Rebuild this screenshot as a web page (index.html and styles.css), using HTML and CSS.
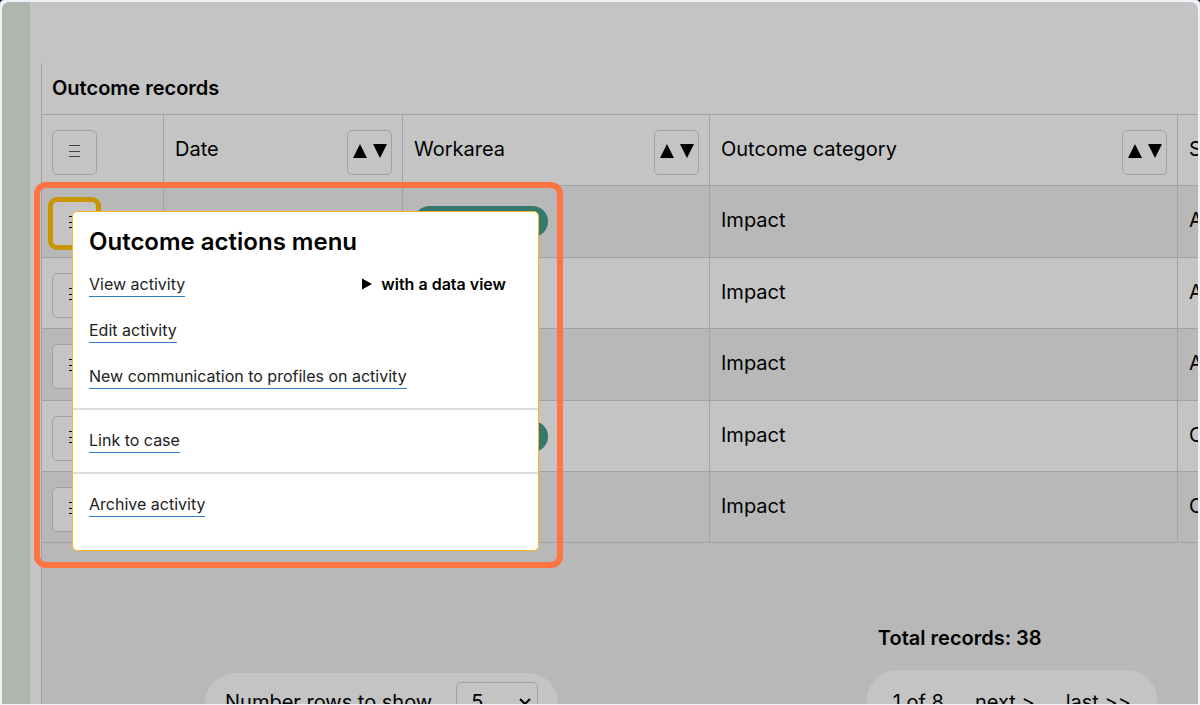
FILE: index.html
```html
<!DOCTYPE html>
<html lang="en">
<head>
<meta charset="utf-8">
<title>Outcome records</title>
<link rel="stylesheet" href="styles.css">
</head>
<body>
<svg class="defs" aria-hidden="true">
  <symbol id="menu" viewBox="0 0 12 14"><path d="M0 1.5h11M0 7.5h11M0 12.5h11" stroke="currentColor" stroke-width="1.2" fill="none"/></symbol>
  <symbol id="sort" viewBox="0 0 34 14"><path d="M0 14 7 0l7 14zM20 0h14l-7 14z" fill="currentColor"/></symbol>
</svg>
<div class="frame">
  <aside class="rail"></aside>
  <main class="content">
    <section class="records">
      <h2 class="records-title">Outcome records</h2>
      <table class="grid">
        <colgroup><col class="c-act"><col class="c-date"><col class="c-area"><col class="c-cat"><col></colgroup>
        <thead>
          <tr>
            <th><button class="square muted" aria-label="Table menu"><svg class="i-menu"><use href="#menu"/></svg></button></th>
            <th><div class="head"><span class="label">Date</span><button class="square" aria-label="Sort by date"><svg class="i-sort"><use href="#sort"/></svg></button></div></th>
            <th><div class="head"><span class="label">Workarea</span><button class="square" aria-label="Sort by workarea"><svg class="i-sort"><use href="#sort"/></svg></button></div></th>
            <th><div class="head"><span class="label">Outcome category</span><button class="square" aria-label="Sort by outcome category"><svg class="i-sort"><use href="#sort"/></svg></button></div></th>
            <th><span class="label">S</span></th>
          </tr>
        </thead>
        <tbody>
          <tr><td><button class="square active" aria-label="Row menu"><svg class="i-menu"><use href="#menu"/></svg></button></td><td></td><td><span class="tag"></span></td><td><span class="label">Impact</span></td><td><span class="label">A</span></td></tr>
          <tr><td><button class="square" aria-label="Row menu"><svg class="i-menu"><use href="#menu"/></svg></button></td><td></td><td></td><td><span class="label">Impact</span></td><td><span class="label">A</span></td></tr>
          <tr><td><button class="square" aria-label="Row menu"><svg class="i-menu"><use href="#menu"/></svg></button></td><td></td><td></td><td><span class="label">Impact</span></td><td><span class="label">A</span></td></tr>
          <tr><td><button class="square" aria-label="Row menu"><svg class="i-menu"><use href="#menu"/></svg></button></td><td></td><td><span class="tag"></span></td><td><span class="label">Impact</span></td><td><span class="label">C</span></td></tr>
          <tr><td><button class="square" aria-label="Row menu"><svg class="i-menu"><use href="#menu"/></svg></button></td><td></td><td></td><td><span class="label">Impact</span></td><td><span class="label">C</span></td></tr>
        </tbody>
      </table>
      <footer class="foot">
        <div class="pill rows">
          <label for="rows">Number rows to show</label>
          <select id="rows" class="select"><option>5</option><option>10</option></select>
        </div>
        <div class="paging">
          <p class="total">Total records: 38</p>
          <nav class="pill pager"><span>1 of 8</span><a href="#next">next &gt;</a><a href="#last">last &gt;&gt;</a></nav>
        </div>
      </footer>
    </section>
  </main>
  <div class="highlight">
    <div class="menu" role="dialog" aria-labelledby="menu-title">
      <h3 class="menu-title" id="menu-title">Outcome actions menu</h3>
      <div class="group">
        <div class="item"><a class="link" href="#view">View activity</a>
          <button class="disclose"><svg class="i-tri" viewBox="0 0 10 12"><path d="M0 0.5 10 6 0 11.5z"/></svg>with a data view</button></div>
        <div class="item"><a class="link" href="#edit">Edit activity</a></div>
        <div class="item"><a class="link" href="#communication">New communication to profiles on activity</a></div>
      </div>
      <div class="group"><div class="item"><a class="link" href="#case">Link to case</a></div></div>
      <div class="group"><div class="item"><a class="link" href="#archive">Archive activity</a></div></div>
    </div>
  </div>
</div>
</body>
</html>
```

FILE: styles.css
```css
* { box-sizing: border-box; }
html { background: #000; }
body {
  margin: 0;
  height: 100vh;
  padding: 2px 2px 1px;
  overflow: hidden;
  background: #f1f0f8;
  border-radius: 4px 4px 0 0;
  font-family: Inter, "Liberation Sans", sans-serif;
  font-size: 20px;
  line-height: 24px;
  color: #000;
}
.defs { position: absolute; width: 0; height: 0; }
.frame {
  position: relative;
  display: flex;
  height: 100%;
  overflow: hidden;
  border-radius: 8px 8px 0 0;
  background: #c4c4c4;
}
.rail { flex: none; width: 28px; background: #aeb6ad; }
.content { flex: 1; min-width: 0; display: flex; flex-direction: column; padding: 61px 0 0 11px; }
.records { flex: 1; display: flex; flex-direction: column; border-left: 1px solid #a2a2a2; }
.records-title { margin: 0; padding: 13px 10px 14px; font-size: 20px; line-height: 24px; font-weight: 600; }

.grid { width: 100%; table-layout: fixed; border-collapse: separate; border-spacing: 0; }
.c-act { width: 122px; }
.c-date { width: 239px; }
.c-area { width: 307px; }
.c-cat { width: 468px; }
.grid th, .grid td {
  height: 71px;
  padding: 0 10px 0 11px;
  border-top: 1px solid #a2a2a2;
  border-right: 1px solid #a2a2a2;
  text-align: left;
  vertical-align: top;
  font-weight: 400;
  white-space: nowrap;
}
.grid th:first-child, .grid td:first-child { padding-left: 10px; }
.grid th:last-child, .grid td:last-child { border-right: 0; }
.grid tbody tr:nth-child(odd) { height: 72px; background: #b8b8b8; }
.grid tbody tr:last-child td { border-bottom: 1px solid #a2a2a2; }
.label { display: block; padding-top: 22px; }
.head { display: flex; justify-content: space-between; }
.square {
  display: flex;
  align-items: center;
  justify-content: center;
  width: 45px;
  height: 45px;
  margin-top: 15px;
  padding: 0 0 3px;
  border: 1px solid #a2a2a2;
  border-radius: 5px;
  background: #c4c4c4;
  color: #000;
}
.muted { color: #444; }
.active { border-color: #c89500; box-shadow: 0 0 0 4px #c89500; }
.i-menu { width: 12px; height: 14px; }
.i-sort { width: 34px; height: 14px; }
.tag { display: block; width: 134px; height: 31px; margin-top: 20px; border-radius: 16px; background: #35786e; }

.foot { flex: 1; display: flex; align-items: flex-start; justify-content: space-between; background: #b8b8b8; padding: 83px 41px 0 163px; }
.pill { display: flex; background: #c4c4c4; border-radius: 30px; white-space: nowrap; }
.rows { align-items: center; gap: 24px; margin-top: 47px; padding: 9px 20px 11px; }
.select {
  appearance: none;
  width: 82px;
  height: 40px;
  padding: 0 14px;
  border: 1px solid #a2a2a2;
  border-radius: 5px;
  background: #c4c4c4 url("data:image/svg+xml,%3Csvg xmlns='http://www.w3.org/2000/svg' width='12' height='8'%3E%3Cpath d='M1 1l5 5 5-5' fill='none' stroke='black' stroke-width='2'/%3E%3C/svg%3E") no-repeat right 6px center;
  color: #000;
  font: inherit;
}
.total { margin: 0 0 20px; padding-left: 11px; font-weight: 600; }
.pager { gap: 31px; padding: 20px 26px; }
.pager a { color: #000; text-decoration: none; }

.highlight { position: absolute; left: 32px; top: 180px; width: 529px; padding: 23px 18px 11px 32px; border: 6px solid #ff7442; border-radius: 12px; }
.menu { border: 1px solid #ffb41f; border-radius: 5px; background: #fff; font-size: 16px; padding-bottom: 14px; }
.menu-title { margin: 0; padding: 14px 16px; font-size: 24px; line-height: 32px; font-weight: 600; }
.group { display: flex; flex-direction: column; gap: 21px; padding: 0 16px 19px; }
.group + .group { padding-top: 18px; border-top: 2px solid #dcdcdc; }
.item { display: flex; align-items: flex-start; justify-content: space-between; }
.link { border-bottom: 1px solid #2f7ac0; color: #222; text-decoration: none; line-height: 24px; }
.disclose { display: flex; align-items: center; gap: 9px; margin-right: 16px; padding: 0; border: 0; background: none; color: #000; font: inherit; font-weight: 600; }
.i-tri { width: 10px; height: 12px; }
```
